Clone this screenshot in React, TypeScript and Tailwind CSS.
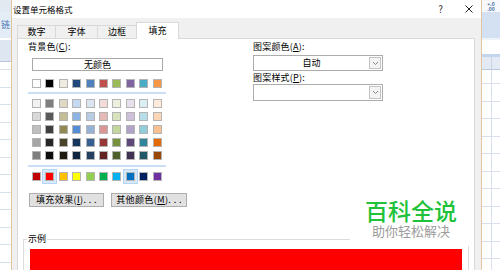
import { FC, JSX } from 'react';

// Office 2010 palette
const themeRow = ['bg-[#ffffff]', 'bg-[#000000]', 'bg-[#eeece1]', 'bg-[#1f497d]', 'bg-[#4f81bd]', 'bg-[#c0504d]', 'bg-[#9bbb59]', 'bg-[#8064a2]', 'bg-[#4bacc6]', 'bg-[#f79646]'];

const shadeRows = [
  ['bg-[#f2f2f2]', 'bg-[#7f7f7f]', 'bg-[#ddd9c3]', 'bg-[#c6d9f0]', 'bg-[#dbe5f1]', 'bg-[#f2dcdb]', 'bg-[#ebf1dd]', 'bg-[#e5e0ec]', 'bg-[#dbeef3]', 'bg-[#fdeada]'],
  ['bg-[#d8d8d8]', 'bg-[#595959]', 'bg-[#c4bd97]', 'bg-[#8db3e2]', 'bg-[#b8cce4]', 'bg-[#e5b9b7]', 'bg-[#d7e3bc]', 'bg-[#ccc1d9]', 'bg-[#b7dde8]', 'bg-[#fbd5b5]'],
  ['bg-[#bfbfbf]', 'bg-[#3f3f3f]', 'bg-[#938953]', 'bg-[#548dd4]', 'bg-[#95b3d7]', 'bg-[#d99694]', 'bg-[#c3d69b]', 'bg-[#b2a2c7]', 'bg-[#92cddc]', 'bg-[#fac08f]'],
  ['bg-[#a5a5a5]', 'bg-[#262626]', 'bg-[#494429]', 'bg-[#17365d]', 'bg-[#366092]', 'bg-[#953734]', 'bg-[#76923c]', 'bg-[#5f497a]', 'bg-[#31859b]', 'bg-[#e36c09]'],
  ['bg-[#7f7f7f]', 'bg-[#0c0c0c]', 'bg-[#1d1b10]', 'bg-[#0f243e]', 'bg-[#244061]', 'bg-[#632423]', 'bg-[#4f6128]', 'bg-[#3f3151]', 'bg-[#205867]', 'bg-[#974806]'],
];

const standardRow = ['bg-[#c00000]', 'bg-[#ff0000]', 'bg-[#ffc000]', 'bg-[#ffff00]', 'bg-[#92d050]', 'bg-[#00b050]', 'bg-[#00b0f0]', 'bg-[#0070c0]', 'bg-[#002060]', 'bg-[#7030a0]'];

const Swatch: FC<{ bg: string; active?: boolean }> = ({ bg, active }): JSX.Element => (
  <div
    className={`w-[9px] h-[9px] border border-[#b4b4b4] ${bg} ${active ? 'shadow-[0_0_0_2px_#d6e8fb,0_0_0_3px_#b5d5f3]' : ''}`}
  />
);

const SwatchRow: FC<{ colors: string[]; active?: number[] }> = ({ colors, active = [] }): JSX.Element => (
  <div className="flex gap-[4.4px] pl-[4px]">
    {colors.map((c, i) => (
      <Swatch key={i} bg={c} active={active.includes(i)} />
    ))}
  </div>
);

const Chevron: FC = (): JSX.Element => (
  <svg width="7" height="5" viewBox="0 0 7 5">
    <path d="M1 1 L3.5 3.5 L6 1" stroke="#8a8a8a" strokeWidth="1" fill="none" />
  </svg>
);

const Select: FC<{ value?: string; tall?: boolean }> = ({ value, tall }): JSX.Element => (
  <div className={`w-[130px] ${tall ? 'h-[17px]' : 'h-[16px]'} border border-[#acacac] bg-white flex`}>
    <div className="flex-1 text-center text-[9px] leading-[14px]">{value}</div>
    <div className="w-[12px] my-px mr-px border border-[#c4c4c4] bg-[#f4f4f4] flex items-center justify-center">
      <Chevron />
    </div>
  </div>
);

const Tab: FC<{ label: string; w: string; active?: boolean }> = ({ label, w, active }): JSX.Element => (
  <div
    className={`${w} -ml-px border border-b-0 border-[#d9d9d9] flex items-center justify-center text-[9px] ${
      active ? 'h-[17px] bg-white relative z-10 -mb-px' : 'h-[13px] bg-[#f0f0f0]'
    }`}
  >
    {label}
  </div>
);

const GridRows: FC<{ count: number }> = ({ count }): JSX.Element => (
  <>
    {Array.from({ length: count }).map((_, i) => (
      <div key={i} className="h-[17.5px] shrink-0 border-b border-[#d7e0ec]" />
    ))}
  </>
);

const App: FC = (): JSX.Element => {
  return (
    <div className="w-[500px] h-[270px] overflow-hidden flex bg-white text-black font-['Noto_Sans_CJK_SC','Microsoft_YaHei',sans-serif]">
      {/* excel sheet, left edge */}
      <div className="w-[11px] shrink-0 flex flex-col overflow-hidden">
        <div className="h-[12px] shrink-0 bg-[#e3e9f1]" />
        <div className="h-[26px] shrink-0 bg-[#e4ecf6] pl-px text-[9px] leading-[26px] text-[#4a7ab8]">链</div>
        <div className="h-[2px] shrink-0 bg-white" />
        <div className="h-[22px] shrink-0 bg-[#dde6f1] border-b border-[#b7c8dc]" />
        <div className="h-[8px] shrink-0 border-b border-[#d7e0ec]" />
        <GridRows count={12} />
      </div>

      {/* dialog */}
      <div className="w-[471px] shrink-0 border-x border-[#e2c49e] flex flex-col">
        <div className="h-[18px] shrink-0 bg-white flex items-center pl-[1px] pr-[8px]">
          <span className="text-[8.5px] leading-none">设置单元格格式</span>
          <span className="ml-auto mr-[22px] text-[10px] leading-none text-[#333]">?</span>
          <svg width="8" height="8" viewBox="0 0 8 8">
            <path d="M0.5 0.5 L7.5 7.5 M7.5 0.5 L0.5 7.5" stroke="#222" strokeWidth="1" />
          </svg>
        </div>

        <div className="flex-1 bg-[#f0f0f0] pl-[5px] pr-[6px] flex flex-col">
          <div className="h-[20px] shrink-0 flex items-end pl-px">
            <Tab label="数字" w="w-[39px]" />
            <Tab label="字体" w="w-[43px]" />
            <Tab label="边框" w="w-[40px]" />
            <Tab label="填充" w="w-[43px]" active />
          </div>

          <div className="flex-1 bg-white border border-[#d9d9d9] relative">
            <div className="flex pt-[2px]">
              {/* background colour */}
              <div className="w-[235px] pl-[10px] flex flex-col">
                <div className="h-[12px] leading-[12px] text-[9px] tracking-[0.2px]">
                  背景色(<u>C</u>):
                </div>
                <div className="ml-[4px] mt-[5px] w-[131px] h-[13px] border border-[#a9a9a9] text-center text-[9px] leading-[11px]">
                  无颜色
                </div>
                <div className="mt-[8px]">
                  <SwatchRow colors={themeRow} />
                </div>
                <div className="mt-[4px] w-[138px] h-[2px] bg-[#cadff5]" />
                <div className="mt-[5px] flex flex-col gap-[4px]">
                  {shadeRows.map((row, i) => (
                    <SwatchRow key={i} colors={row} />
                  ))}
                </div>
                <div className="mt-[5px] w-[138px] h-[2px] bg-[#cadff5]" />
                <div className="mt-[5px]">
                  <SwatchRow colors={standardRow} active={[1, 7]} />
                </div>
                <div className="mt-[12px] ml-px flex gap-[7px]">
                  <div className="w-[75px] h-[14px] bg-[#e1e1e1] border border-[#adadad] text-[9px] leading-[12px] text-center tracking-[0.4px]">
                    填充效果(<u>I</u>). . .
                  </div>
                  <div className="w-[76px] h-[14px] bg-[#e1e1e1] border border-[#adadad] text-[9px] leading-[12px] text-center tracking-[0.4px]">
                    其他颜色(<u>M</u>). . .
                  </div>
                </div>
              </div>

              {/* pattern */}
              <div className="flex flex-col">
                <div className="h-[12px] leading-[12px] text-[9px] tracking-[0.2px]">
                  图案颜色(<u>A</u>):
                </div>
                <div className="mt-[2px]">
                  <Select value="自动" />
                </div>
                <div className="mt-[1px] h-[12px] leading-[12px] text-[9px] tracking-[0.2px]">
                  图案样式(<u>P</u>):
                </div>
                <Select tall />
              </div>
            </div>

            {/* sample */}
            <div className="mt-[32px] ml-[5px] w-[446px] h-[60px] border border-[#dcdcdc] relative pt-[9px] px-[6px]">
              <span className="absolute -top-[7px] left-[3px] bg-white px-px text-[9px] leading-[12px]">示例</span>
              <div className="h-[40px] bg-[#ff0000]" />
            </div>

            {/* watermark */}
            <div className="absolute left-[332px] top-[151px] w-[122px] h-[56px] bg-white flex flex-col items-center">
              <div className="mt-[9px] text-[23px] leading-[22px] font-medium text-[#1fc23a]">百科全说</div>
              <div className="mt-[3px] text-[13px] leading-[14px] text-[#9c9c9c]">助你轻松解决</div>
            </div>
          </div>
        </div>
      </div>

      {/* excel sheet, right edge */}
      <div className="w-[18px] shrink-0 flex flex-col overflow-hidden">
        <div className="h-[12px] shrink-0 bg-[#f6f8fb] flex flex-col items-center justify-center text-[5px] leading-[5.5px] font-bold text-[#3e6aa6]">
          <span>+.0</span>
          <span>.00</span>
        </div>
        <div className="h-[26px] shrink-0 bg-[#d3e1f3]" />
        <div className="h-[2px] shrink-0 bg-[#eef3fa]" />
        <div className="h-[14px] shrink-0 bg-white" />
        <div className="h-[3px] shrink-0 bg-[#c2d5ec]" />
        <div className="h-[13px] shrink-0 bg-[#e4eaf3] border-b border-[#b7c8dc] flex">
          <div className="w-[10px] border-r border-[#c6d3e3]" />
        </div>
        <div className="flex-1 flex">
          <div className="w-[10px] border-r border-[#d7e0ec] flex flex-col">
            <div className="h-[14px] shrink-0 border-b border-[#d7e0ec]" />
            <GridRows count={11} />
          </div>
          <div className="flex-1 flex flex-col">
            <div className="h-[14px] shrink-0 border-b border-[#d7e0ec]" />
            <GridRows count={11} />
          </div>
        </div>
      </div>
    </div>
  );
};

export default App;
